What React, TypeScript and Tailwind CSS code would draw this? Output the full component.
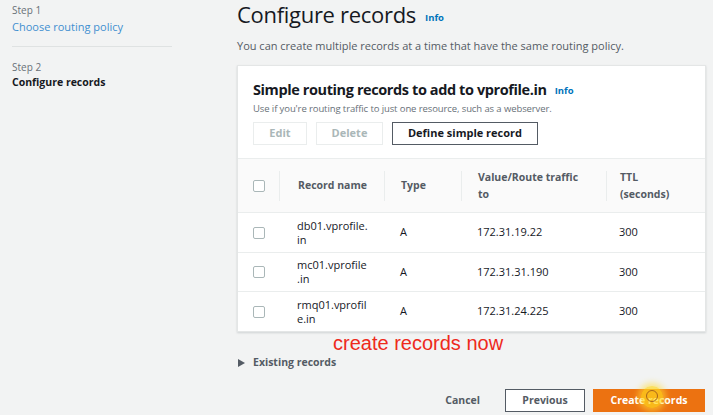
import React from 'react';

const rows = [
  { name: ['db01.vprofile.', 'in'], type: 'A', value: '172.31.19.22', ttl: '300', h: 'h-[40px]' },
  { name: ['mc01.vprofile', '.in'], type: 'A', value: '172.31.31.190', ttl: '300', h: 'h-[39px]' },
  { name: ['rmq01.vprofil', 'e.in'], type: 'A', value: '172.31.24.225', ttl: '300', h: 'h-[39px]' },
];

const cols = 'grid grid-cols-[41px_105px_77px_145px_1fr]';

function Box() {
  return <div className="w-[12px] h-[12px] rounded-[2px] border border-[#aab7b8] bg-white" />;
}

function Info({ className = '' }: { className?: string }) {
  return <span className={`text-[9.5px] font-bold text-[#0073bb] ${className}`}>Info</span>;
}

export default function App() {
  return (
    <div
      className="w-[713px] h-[415px] overflow-hidden bg-[#f2f3f3] text-[#16191f] flex"
      style={{ fontFamily: '"Open Sans", "Noto Sans", sans-serif' }}
    >
      {/* Steps */}
      <div className="w-[237px] shrink-0 pl-3 pt-[3px]">
        <div className="w-[160px]">
          <div className="text-[10px] text-[#687078] leading-[15px]">Step 1</div>
          <div className="text-[11px] text-[#3f8fd0] leading-[16px] mt-[1px]">Choose routing policy</div>
          <div className="border-t border-[#dfe2e2] mt-[11px] mb-[13px]" />
          <div className="text-[10px] text-[#687078] leading-[15px]">Step 2</div>
          <div className="text-[10.5px] font-bold text-[#16191f] leading-[16px] -mt-[1px]">Configure records</div>
        </div>
      </div>

      {/* Main */}
      <div className="flex-1 pr-[7px]">
        <div className="flex items-end gap-[9px] h-[24px] mt-[2px]">
          <h1 className="text-[22px] leading-[24px] tracking-[-0.3px] text-[#16191f]">Configure records</h1>
          <Info className="mb-[1px]" />
        </div>
        <p className="text-[11px] text-[#545b64] mt-[12px] leading-[16px]">
          You can create multiple records at a time that have the same routing policy.
        </p>

        <div className="mt-[11px] bg-white border border-[#e4e6e6] shadow-[0_1px_2px_rgba(0,28,36,0.15)]">
          <div className="px-[15px] pt-[14px] pb-[13px]">
            <div className="flex items-center gap-[8px]">
              <h2 className="text-[14.5px] font-bold leading-[20px] tracking-[-0.4px]">Simple routing records to add to vprofile.in</h2>
              <Info className="mt-[2px]" />
            </div>
            <div className="text-[9.5px] text-[#687078] leading-[14px] mt-[2px] tracking-[-0.1px]">
              Use if you're routing traffic to just one resource, such as a webserver.
            </div>
            <div className="flex gap-[9px] mt-[6px]">
              <div className="w-[54px] h-[23px] border border-[#eaeded] flex items-center justify-center text-[11px] font-bold text-[#aab7b8]">Edit</div>
              <div className="w-[67px] h-[23px] border border-[#eaeded] flex items-center justify-center text-[11px] font-bold text-[#aab7b8]">Delete</div>
              <div className="w-[146px] h-[23px] border border-[#545b64] flex items-center justify-center text-[11px] font-bold text-[#16191f]">Define simple record</div>
            </div>
          </div>

          <div className="border-t border-[#eaeded]">
            <div className={`${cols} bg-[#fafafa] h-[54px] items-center border-b border-[#eaeded] text-[10.5px] font-bold text-[#545b64]`}>
              <div className="pl-[15px]"><Box /></div>
              <div className="pl-[18px] border-l border-[#eaeded] h-[30px] flex items-center">Record name</div>
              <div className="pl-[16px] border-l border-[#eaeded] h-[30px] flex items-center">Type</div>
              <div className="pl-[16px] border-l border-[#eaeded] h-[30px] flex items-center leading-[17px]">Value/Route traffic<br />to</div>
              <div className="pl-[13px] border-l border-[#eaeded] h-[30px] flex items-center leading-[17px]">TTL<br />(seconds)</div>
            </div>
            {rows.map((r, i) => (
              <div
                key={i}
                className={`${cols} ${r.h} items-center text-[11px] text-[#16191f] ${i < rows.length - 1 ? 'border-b border-[#eaeded]' : ''}`}
              >
                <div className="pl-[15px]"><Box /></div>
                <div className="pl-[18px] leading-[14px]">{r.name[0]}<br />{r.name[1]}</div>
                <div className="pl-[16px]">{r.type}</div>
                <div className="pl-[16px]">{r.value}</div>
                <div className="pl-[13px]">{r.ttl}</div>
              </div>
            ))}
          </div>
        </div>

        <div
          className="text-[20px] text-[#ee2a1b] leading-[22px] mt-[0px] pl-[96px]"
          style={{ fontFamily: '"Liberation Sans", Arial, sans-serif' }}
        >
          create records now
        </div>

        <div className="flex items-center gap-[8px] mt-[1px] h-[16px] pl-[1px] text-[10.5px] font-bold text-[#545b64]">
          <svg width="7" height="8" viewBox="0 0 7 8"><path d="M0 0 L7 4 L0 8 Z" fill="#545b64" /></svg>
          <span>Existing records</span>
        </div>

        <div className="flex items-center justify-end mt-[18px] pr-[1px]">
          <div className="text-[10.5px] font-bold text-[#545b64] mr-[25px]">Cancel</div>
          <div className="w-[80px] h-[23px] border border-[#545b64] bg-white flex items-center justify-center text-[10.5px] font-bold text-[#545b64]">Previous</div>
          <div className="relative ml-[8px] w-[112px] h-[23px] bg-[#ec7211] flex items-center justify-center text-[10.5px] font-bold text-white">
            Create records
            <div className="absolute left-[48px] top-[-3px] w-[22px] h-[22px] rounded-full bg-[rgba(255,215,30,0.7)] shadow-[0_0_6px_3px_rgba(255,220,60,0.6)]">
              <div className="absolute left-[5px] top-[4px] w-[12px] h-[12px] rounded-full border border-[#a8651c]" />
            </div>
          </div>
        </div>
      </div>
    </div>
  );
}
